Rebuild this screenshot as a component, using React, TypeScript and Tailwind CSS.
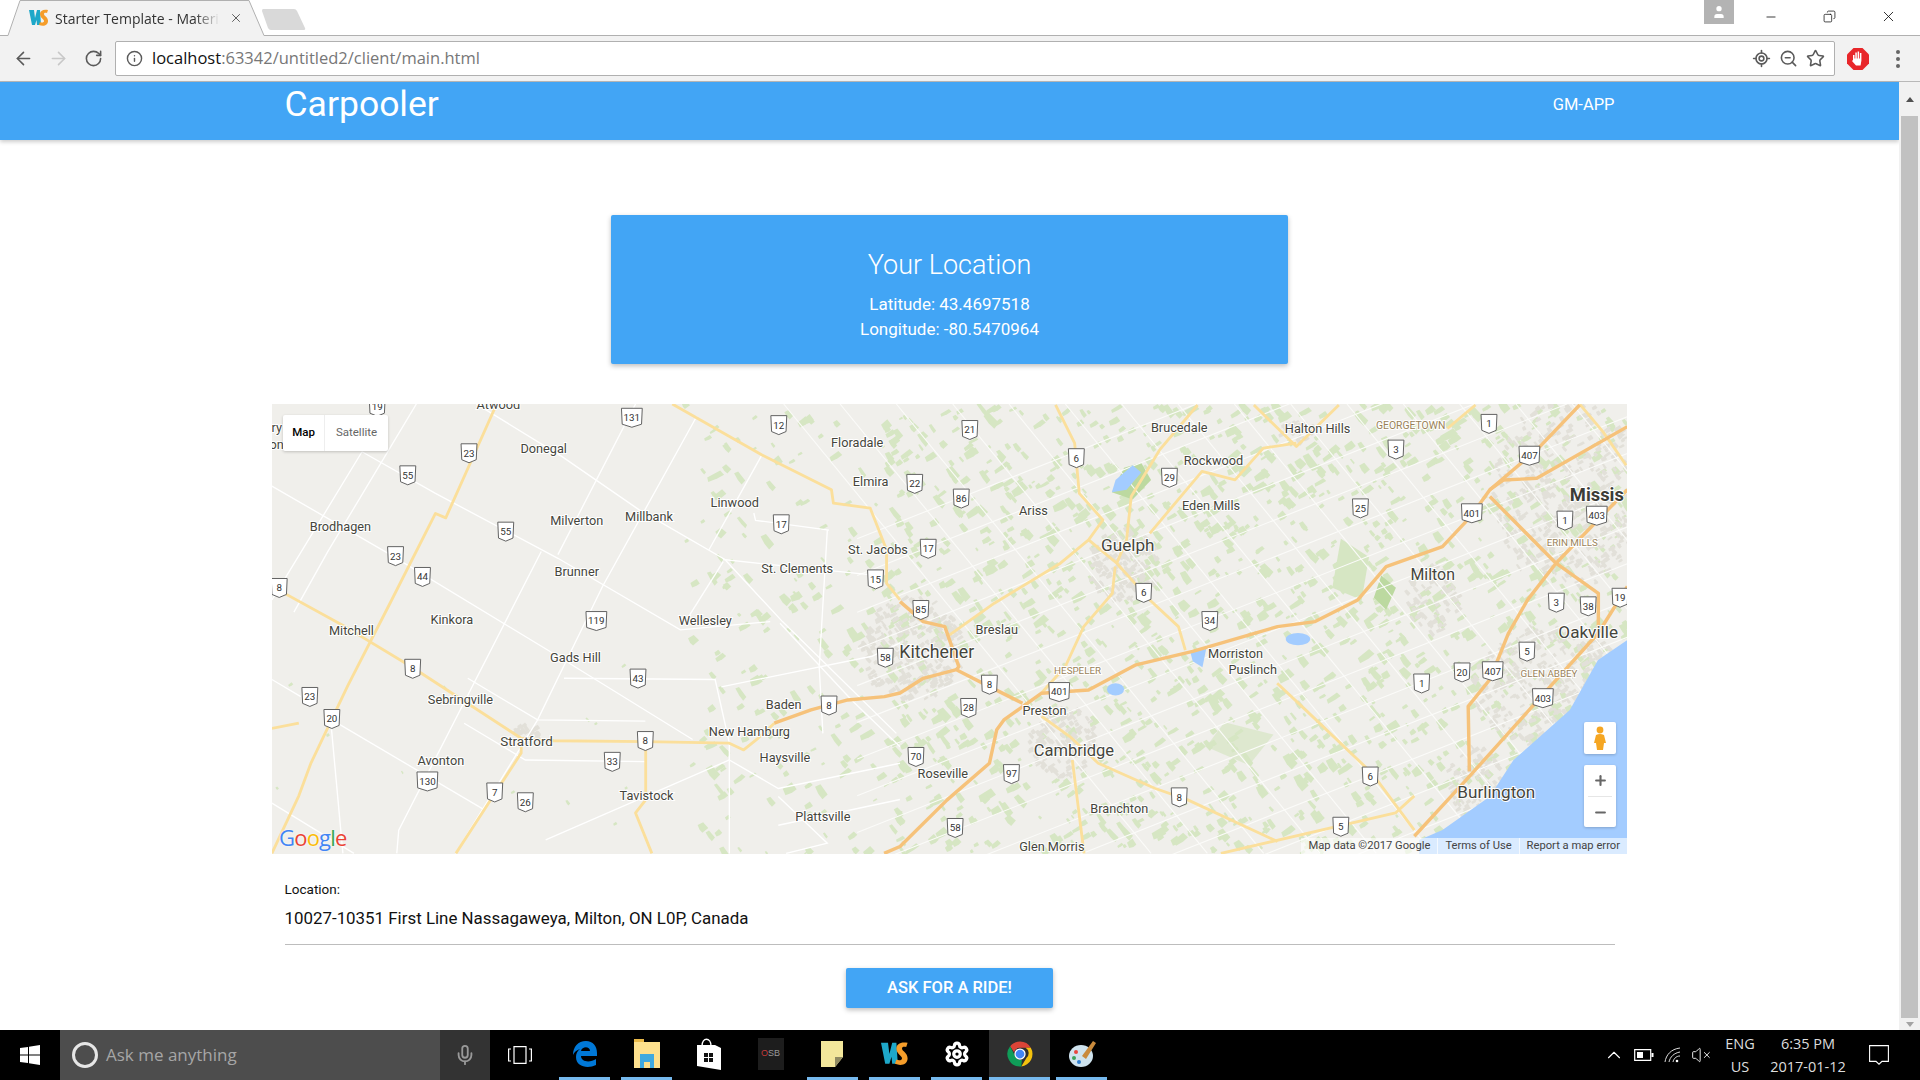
// ** Icon Imports
import {
  ArrowLeft, ArrowRight, RotateCw, Info, LocateFixed, ZoomOut, Star, Minus, Plus, X, Copy,
  User, Mic, ChevronUp, VolumeX, Settings,
} from "lucide-react"

type Pt = [number, number]

// all map data below is in the 1568 wide coordinates of the screenshot, the viewBox takes care of the scale
const yellowRoads: Pt[][] = [
  [[405.6, 330], [364, 423], [355.6, 419.4], [319, 491.7], [284, 560], [254, 623], [244, 650], [222, 697]],
  [[222, 479], [282, 512], [335.6, 544.4], [425.6, 603]],
  [[425.6, 603], [452.3, 605], [527.3, 605.7], [595.6, 607], [607.3, 612.5], [619, 603], [632.3, 590.7]],
  [[425.6, 603], [425.6, 615], [372.3, 697]],
  [[527.3, 605.7], [527.3, 653.3], [519, 664], [532.3, 697]],
  [[222, 595], [244, 590.7]],
  [[549, 330], [622.3, 371.6], [679, 400], [680.6, 411], [710.6, 415], [724, 449], [724, 476.4], [735, 490]],
  [[862, 330.8], [877.6, 362], [881.4, 403], [900.7, 424.7], [889, 441], [866, 460], [812, 492.7], [773.5, 520]],
  [[889, 441], [912, 460], [939, 490], [962.4, 511.8], [968, 531]],
  [[978, 330.8], [947, 367.5], [923.8, 405.6], [920, 441], [912, 460]],
  [[910.7, 462.8], [908.4, 484.6], [885, 511.8], [870, 544.4], [850.6, 566]],
  [[1058.7, 362], [1031.7, 366], [1008.6, 392], [981.6, 385], [939, 435.6]],
  [[1024, 330.8], [1058.7, 364.8], [1093.4, 330.8]],
  [[1043, 558], [1066.4, 580], [1120.4, 631.5], [1155, 678]],
  [[850.6, 585], [873.7, 601.6], [896.9, 623.4], [943, 643.8], [970, 653.3], [1043.3, 687.3]],
  [[875.7, 620.7], [885.3, 697]],
  [[997, 697], [1139.6, 664], [1155, 650]],
  [[1182, 350], [1205, 330.8]],
  [[1290, 330], [1309, 352.6], [1328, 380]],
]

const orangeRoads: Pt[][] = [
  [[632.3, 590.7], [662.3, 579.8], [692.3, 571.7], [722.3, 569], [735, 566], [754, 554], [781, 547], [808, 560.8], [835, 574.4]],
  [[781, 547], [783, 544.5], [771.6, 511.8], [754, 507.7], [735, 491.4]],
  [[722, 697], [735, 691.4], [773.5, 653.3], [808, 623.4], [814, 596], [819.8, 588], [850.6, 566.2], [889, 563.5], [927.7, 543], [974, 532], [1043.3, 511.8], [1074, 507.7], [1108.8, 490], [1132, 462.8], [1178, 446.5], [1201, 422], [1216.7, 400], [1228, 392], [1255, 390.7], [1329, 348.5]],
  [[1216.7, 405.6], [1270.7, 460], [1305.3, 484.6], [1305.3, 517]],
  [[1270.7, 460], [1247.5, 490], [1232, 517], [1216.7, 555], [1199, 577], [1200, 630]],
  [[1155, 683], [1197.4, 637], [1251.4, 577], [1305.3, 517], [1329, 479]],
  [[1290, 330.8], [1255, 367.5], [1216.7, 400]],
  [[1329, 400], [1270.7, 460]],
]

const whiteRoads: Pt[][] = [
  [[222, 397], [317, 452], [455.6, 536], [565.6, 604]],
  [[295.6, 369], [355.6, 403], [455.6, 456], [555.6, 514.5], [629, 507.7]],
  [[389, 330], [459, 373], [522, 416.5], [592, 457], [639, 507.7], [732, 599]],
  [[222, 555], [245.6, 569]],
  [[271, 588], [395.6, 661.5]],
  [[379, 590.7], [429, 620.7], [527, 622]],
  [[382, 554], [439, 588], [527, 589]],
  [[460.6, 554], [584, 555], [595.6, 607], [595.6, 697]],
  [[595.6, 620.7], [445.6, 686]],
  [[519, 330], [455.6, 453]],
  [[569, 340], [492, 479], [439, 588], [372, 697]],
  [[442, 450.5], [325.6, 678], [324, 697]],
  [[295.6, 369], [232, 473.7], [222, 490]],
  [[222, 656], [289, 697]],
  [[589, 561], [712, 536], [735, 525]],
  [[637, 509], [695.6, 572], [735, 610]],
  [[675.6, 433], [669, 545], [672, 599]],
  [[615.6, 419], [617, 425], [677, 433]],
  [[590.6, 457], [632, 461.4], [712, 469.6]],
  [[622, 372], [579, 449]],
  [[590.6, 458.7], [559, 509]],
  [[635.6, 650.6], [675.6, 688.7], [642, 697]],
  [[735, 653], [635.6, 674]],
  [[735, 623.4], [635.6, 644], [595.6, 620.7]],
  [[340, 330], [268, 450], [240, 500]],
  [[270, 588], [280, 697]],
]

const labels: [string, number, number, number?, string?][] = [
  ["Atwood", 407, 330], ["Donegal", 444, 366], ["Floradale", 700, 361], ["Brucedale", 963, 349],
  ["Halton Hills", 1076, 350], ["GEORGETOWN", 1152, 347, 8.5, "#9a8259"], ["Rockwood", 991, 376],
  ["Linwood", 600, 410], ["Elmira", 711, 393], ["Ariss", 844, 417], ["Eden Mills", 989, 413],
  ["Milverton", 471, 425], ["Millbank", 530, 422], ["Brodhagen", 278, 430], ["St. Jacobs", 717, 449],
  ["Guelph", 921, 445, 14], ["St. Clements", 651, 464], ["Brunner", 471, 467], ["Milton", 1170, 469, 13],
  ["Kinkora", 369, 506], ["Wellesley", 576, 507], ["Mitchell", 287, 515], ["Breslau", 814, 514],
  ["Oakville", 1297, 516, 14], ["Kitchener", 765, 532, 14.5], ["Morriston", 1009, 534], ["Gads Hill", 470, 537],
  ["Puslinch", 1023, 547], ["HESPELER", 880, 548, 8, "#9a8259"], ["GLEN ABBEY", 1265, 550, 8, "#9a8259"],
  ["ERIN MILLS", 1284, 443, 8, "#9a8259"], ["Sebringville", 376, 571], ["Baden", 640, 575], ["Preston", 853, 580],
  ["New Hamburg", 612, 597], ["Stratford", 430, 605, 11], ["Cambridge", 877, 613, 13.5], ["Haysville", 641, 619],
  ["Avonton", 360, 621], ["Roseville", 770, 632], ["Burlington", 1222, 647, 14], ["Tavistock", 528, 650],
  ["Branchton", 914, 660], ["Plattsville", 672, 667], ["Glen Morris", 859, 691], ["ry", 226, 349], ["on", 226, 363],
]

const shields: [string, number, number][] = [
  ["19", 308, 332], ["131", 516, 341], ["12", 636, 347], ["21", 792, 351], ["1", 1216, 346], ["23", 383, 370],
  ["55", 333, 388], ["22", 747, 395], ["86", 785, 407], ["6", 879, 374], ["29", 955, 390], ["3", 1140, 367],
  ["407", 1249, 372], ["55", 413, 434], ["17", 638, 428], ["17", 758, 448], ["25", 1111, 415], ["401", 1202, 419],
  ["1", 1278, 425], ["403", 1304, 421], ["23", 323, 454], ["44", 345, 471], ["15", 715, 473], ["85", 752, 498],
  ["6", 934, 484], ["3", 1271, 492], ["38", 1297, 495], ["19", 1323, 488], ["8", 228, 480], ["119", 487, 507],
  ["34", 988, 507], ["5", 1247, 532], ["58", 723, 537], ["8", 337, 546], ["43", 521, 554], ["8", 808, 559],
  ["401", 865, 565], ["20", 1194, 549], ["407", 1219, 548], ["1", 1161, 558], ["403", 1260, 570], ["23", 253, 569],
  ["20", 271, 587], ["8", 677, 576], ["28", 791, 578], ["8", 527, 605], ["33", 500, 622], ["70", 748, 618],
  ["97", 826, 632], ["6", 1119, 634], ["130", 349, 638], ["7", 404, 647], ["26", 429, 655], ["8", 963, 651],
  ["5", 1095, 675], ["58", 780, 676],
]

// small seeded generator so the scattered fields stay the same on every render
const seeded = (seed: number) => () => {
  seed = (seed * 16807) % 2147483647
  return seed / 2147483647
}

// fields follow the concession grid, so the blocks are turned to one of two angles
const blob = (rnd: () => number, x: number, y: number, size: number) => {
  const a = rnd() < 0.5 ? 0.85 + rnd() * 0.2 : -0.62 + rnd() * 0.2
  const l = size * (0.7 + rnd() * 0.9)
  const w = size * (0.4 + rnd() * 0.5)
  const c = Math.cos(a)
  const s = Math.sin(a)
  return [[l, w * 0.8], [l * 0.1, w], [-l, w * 0.8], [-l * 0.9, -w * 0.7], [l * 0.8, -w]]
    .map(([px, py]) => `${(x + px * c - py * s).toFixed(1)},${(y + px * s + py * c).toFixed(1)}`)
    .join(" ")
}

const makeFields = () => {
  const rnd = seeded(4217)
  const out: string[] = []
  for (let i = 0; i < 2100; i++) {
    const x = 560 + rnd() * 770
    const y = 330 + rnd() * 367
    if (x < 720 && rnd() < 0.6) continue
    out.push(blob(rnd, x, y, 1.6 + rnd() * 3))
  }
  for (let i = 0; i < 12; i++) out.push(blob(rnd, 222 + rnd() * 340, 500 + rnd() * 190, 1.4))
  return out
}

const urbanAreas: [number, number, number, number, number][] = [
  [745, 530, 42, 42, 260], [918, 462, 30, 30, 150], [868, 605, 28, 30, 120], [1280, 405, 60, 78, 380],
  [1265, 560, 62, 50, 300], [1205, 640, 24, 30, 80], [1170, 490, 22, 28, 70], [1060, 352, 14, 10, 24],
  [430, 600, 11, 8, 26],
]

const makeUrban = () => {
  const rnd = seeded(991)
  const out: string[] = []
  urbanAreas.forEach(([cx, cy, rx, ry, n]) => {
    for (let i = 0; i < n; i++) {
      const a = rnd() * 6.28
      const r = Math.sqrt(rnd())
      out.push(blob(rnd, cx + Math.cos(a) * r * rx, cy + Math.sin(a) * r * ry, 2.2))
    }
  })
  return out
}

const makeGrid = () => {
  const lines: Pt[][] = []
  for (let i = 0; i < 19; i++) {
    const x = 640 + i * 46
    lines.push([[x, 330], [x + 300, 697]])
  }
  for (let i = 0; i < 20; i++) {
    const y = 440 + i * 30
    lines.push([[700, y], [1330, y - 250]])
  }
  return lines
}

const fields = makeFields()
const urban = makeUrban()
const grid = makeGrid()

const toPoints = (pts: Pt[]) => pts.map((p) => p.join(",")).join(" ")

const Shield = ({ text, x, y }: { text: string; x: number; y: number }) => {
  const w = text.length === 3 ? 8.5 : 6.5
  return (
    <g transform={`translate(${x} ${y})`}>
      <path
        d={`M${-w} -7.5H${w}L${w - 0.6} 5.5L0 8L${-w + 0.6} 5.5Z`}
        fill="#fff"
        stroke="#5f5f5f"
        strokeWidth="0.8"
        strokeLinejoin="round"
      />
      <text textAnchor="middle" y="3" fontSize="8" fill="#333" fontFamily="Roboto, sans-serif">{text}</text>
    </g>
  )
}

const MapCanvas = () => (
  <svg viewBox="222.1 330 1106.6 367.5" preserveAspectRatio="none" className="block h-full w-full">
    <rect x="222" y="330" width="1108" height="368" fill="#f0efeb" />
    {fields.map((p, i) => <polygon key={i} points={p} fill="#d6e6c3" />)}
    {urban.map((p, i) => <polygon key={i} points={p} fill="#e2e0d9" />)}
    <polygon points="918,382 932,378 940,392 925,408 908,402" fill="#bcd9a0" />
    <polygon points="1128,470 1140,480 1132,498 1122,488" fill="#bcd9a0" />
    <polygon points="1095,440 1118,455 1112,490 1088,480" fill="#d6e6c3" />
    <polygon points="1040,600 1000,590 985,610 1020,625" fill="#d6e6c3" opacity="0.7" />
    {grid.map((l, i) => <polyline key={i} points={toPoints(l)} fill="none" stroke="#fbfbf9" strokeWidth="0.9" />)}
    {whiteRoads.map((l, i) => <polyline key={i} points={toPoints(l)} fill="none" stroke="#fff" strokeWidth="1.1" />)}
    <polygon
      points="1329,522.7 1305,539 1282,580 1236,620.7 1216.7,650.6 1178,677.8 1159,686 1159,698 1329,698"
      fill="#a3ccff"
    />
    <polygon points="911,392 925,380 932,386 920,400 908,402" fill="#a3ccff" />
    <ellipse cx="1060" cy="522" rx="10" ry="5" fill="#a3ccff" />
    <ellipse cx="911" cy="563" rx="7" ry="5" fill="#a3ccff" />
    <polygon points="972,532 985,530 982,545 974,540" fill="#a3ccff" />
    {yellowRoads.map((l, i) => (
      <polyline key={i} points={toPoints(l)} fill="none" stroke="#fbdf9b" strokeWidth="2.3" strokeLinejoin="round" />
    ))}
    {orangeRoads.map((l, i) => (
      <polyline key={i} points={toPoints(l)} fill="none" stroke="#f6c27a" strokeWidth="2.8" strokeLinejoin="round" />
    ))}
    {labels.map(([t, x, y, size, color]) => (
      <text
        key={t + x}
        x={x}
        y={y + (size ?? 10.4) * 0.36}
        textAnchor="middle"
        fontSize={size ?? 10.4}
        fill={color ?? "#45453c"}
        stroke="#ffffff"
        strokeWidth="1.6"
        paintOrder="stroke"
        fontFamily="Roboto, sans-serif"
      >
        {t}
      </text>
    ))}
    <text
      x="1282"
      y="409"
      fontSize="15"
      fontWeight="700"
      fill="#3c3c36"
      stroke="#fff"
      strokeWidth="1.6"
      paintOrder="stroke"
      fontFamily="Roboto, sans-serif"
    >
      Missis
    </text>
    {shields.map(([t, x, y], i) => <Shield key={i} text={t} x={x} y={y} />)}
  </svg>
)

const WsIcon = ({ size = 20 }: { size?: number }) => (
  <svg width={size} height={size} viewBox="0 0 20 20">
    <path d="M0 2h5l1 8 2-8h3l1 15H8l-.5-5L6 17H3z" fill="#1ea8c9" />
    <path d="M11 6c0-3 3-5 8-4l-1 3c-2-.5-3 0-3 1 0 2 4 3 4 7 0 4-4 6-9 4l1-3c2 1 4 .5 4-1 0-2-4-3-4-7z" fill="#f59d2a" />
  </svg>
)

const ChromeIcon = () => (
  <svg width="30" height="30" viewBox="0 0 48 48">
    <path d="M24 4a20 20 0 0 1 17.3 10H24a10 10 0 0 0-9.5 7L8.2 11.6A20 20 0 0 1 24 4z" fill="#db4437" />
    <path d="M41.3 14A20 20 0 0 1 26 43.9L34.5 30a10 10 0 0 0-1.5-16z" fill="#f4c20d" />
    <path d="M8.2 11.6L16 27a10 10 0 0 0 11 6.5L26 43.9A20 20 0 0 1 8.2 11.6z" fill="#0f9d58" />
    <circle cx="24" cy="24" r="8" fill="#4285f4" stroke="#fff" strokeWidth="2" />
  </svg>
)

const EdgeIcon = () => (
  <svg width="26" height="28" viewBox="0 0 26 28">
    <path
      d="M1 15C1 7 6 1 14 1c7 0 11 5 11 12v3H9c0 6 9 7 15 3v6c-8 4-20 2-20-8 0-3 1-6 4-8-3 1-6 3-7 6zM9 11h9c0-5-8-5-9 0z"
      fill="#0078d7"
    />
  </svg>
)

const ExplorerIcon = () => (
  <svg width="28" height="30" viewBox="0 0 28 30">
    <path d="M1 0h10v3h16v26H1z" fill="#fde08d" />
    <path d="M1 0h10v3H1z" fill="#e9b949" />
    <path d="M7 15h14v14H7z" fill="#3fa9e0" />
    <path d="M11 23h6v6h-6z" fill="#fde08d" />
  </svg>
)

const StoreIcon = () => (
  <svg width="26" height="32" viewBox="0 0 26 32">
    <path d="M6 8c0-9 9-9 9 0" fill="none" stroke="#fff" strokeWidth="1.4" />
    <path d="M1 7h18l6 3v22L1 28z" fill="#fff" />
    <path d="M8 15h4v4H8zM13 15h4v4h-4zM8 20h4v4H8zM13 20h4v4h-4z" fill="#111" />
  </svg>
)

const StickyIcon = () => (
  <svg width="24" height="26" viewBox="0 0 24 26">
    <path d="M0 0h22v16l-8 10H0z" fill="#f3e79b" />
    <path d="M22 16l-8 10V16z" fill="#8f8a62" />
  </svg>
)

const PaintIcon = () => (
  <svg width="30" height="30" viewBox="0 0 30 30">
    <ellipse cx="14" cy="17" rx="12" ry="11" fill="#cfe3ee" />
    <circle cx="9" cy="13" r="2" fill="#e8473f" />
    <circle cx="7" cy="19" r="2" fill="#3da35a" />
    <circle cx="12" cy="23" r="2" fill="#2f7fd0" />
    <path d="M15 17L26 2l3 2-10 16z" fill="#c98a3c" />
  </svg>
)

const Tab = () => (
  <div className="relative flex h-[36px] w-[266px] items-center pl-[29px] pr-[23px]">
    <svg className="absolute inset-0" width="266" height="36" viewBox="0 0 266 36">
      <path d="M0 35.5H8L20 .5H249L264 35.5H266V36H0Z" fill="#f2f2f2" />
      <path d="M0 35.5H8L20 .5H249L264 35.5H266" fill="none" stroke="#b0b0b0" />
    </svg>
    <span className="relative mr-[6px] flex w-[20px] shrink-0"><WsIcon /></span>
    <span className="relative w-[165px] overflow-hidden whitespace-nowrap font-['Open_Sans',sans-serif] text-[14px] text-[#333] [mask-image:linear-gradient(to_right,#000_85%,transparent)]">
      Starter Template - Material Design
    </span>
    <X className="relative ml-auto text-[#555]" size={14} strokeWidth={1.6} />
  </div>
)

const TabStrip = () => (
  <div className="relative flex h-[36px] items-start bg-white">
    <div className="absolute inset-x-0 bottom-0 h-px bg-[#b0b0b0]" />
    <div className="relative flex">
      <Tab />
      <svg className="-ml-[4px] mt-[9px]" width="44" height="22" viewBox="0 0 44 22">
        <path d="M1 0H32Q34 0 35 2L43 19Q44 21 41 21H9Q7 21 6 19L0 2Q0 0 1 0Z" fill="#d9d9d9" />
      </svg>
    </div>
    <div className="ml-auto mr-[2px] flex items-start">
      <div className="flex h-[24px] w-[30px] items-center justify-center bg-[#b3b3b3]">
        <User size={16} className="text-white" fill="#fff" strokeWidth={0} />
      </div>
      <div className="ml-[7px] flex h-[33px] w-[59px] items-center justify-center">
        <Minus size={14} className="text-[#111]" strokeWidth={1.4} />
      </div>
      <div className="flex h-[33px] w-[59px] items-center justify-center">
        <Copy size={13} className="-scale-x-100 text-[#111]" strokeWidth={1.4} />
      </div>
      <div className="flex h-[33px] w-[59px] items-center justify-center">
        <X size={17} className="text-[#111]" strokeWidth={1.2} />
      </div>
    </div>
  </div>
)

const Toolbar = () => (
  <div className="flex h-[46px] items-center border-b border-[#b8b8b8] bg-[#f2f2f2]">
    <div className="flex w-[115px] items-center pl-[13px]">
      <ArrowLeft size={21} className="text-[#5a5a5a]" strokeWidth={1.8} />
      <ArrowRight size={21} className="ml-[14px] text-[#c8c8c8]" strokeWidth={1.8} />
      <RotateCw size={19} className="ml-[15px] text-[#5a5a5a]" strokeWidth={2} />
    </div>
    <div className="flex h-[35px] w-[1720px] items-center rounded-[2px] border border-[#b0b0b0] bg-white pl-[10px] pr-[9px]">
      <Info size={17} className="text-[#5a5a5a]" strokeWidth={2} />
      <span className="ml-[9px] font-['Open_Sans',sans-serif] text-[16.5px] text-[#111]">
        localhost<span className="text-[#777]">:63342/untitled2/client/main.html</span>
      </span>
      <div className="ml-auto flex items-center gap-[8px]">
        <LocateFixed size={19} className="text-[#5a5a5a]" strokeWidth={2} />
        <ZoomOut size={19} className="text-[#5a5a5a]" strokeWidth={2} />
        <Star size={19} className="text-[#5a5a5a]" strokeWidth={2} />
      </div>
    </div>
    <svg className="ml-[12px]" width="22" height="22" viewBox="0 0 22 22">
      <path d="M6.500 0h9L22 6.500v9L15.500 22h-9L0 15.500v-9z" fill="#e8262a" />
      <path d="M6 12V7h1.500v3.500h.8V4.500h1.500v6h.8V3.500h1.500v7h.8V5h1.500v7.500l-.8 5H9l-4-4.500 1-1z" fill="#fff" />
    </svg>
    <div className="ml-[27px] flex flex-col gap-[3px]">
      <span className="h-[4px] w-[4px] rounded-full bg-[#666]" />
      <span className="h-[4px] w-[4px] rounded-full bg-[#666]" />
      <span className="h-[4px] w-[4px] rounded-full bg-[#666]" />
    </div>
  </div>
)

const MapControls = () => (
  <>
    <div className="absolute left-[11px] top-[11px] flex h-[36px] w-[105px] items-center rounded-[2px] bg-white font-['Roboto',sans-serif] text-[11.5px] shadow-[0_1px_3px_rgba(0,0,0,0.2)]">
      <span className="flex h-full w-[42px] items-center justify-center border-r border-[#eee] font-medium text-black">Map</span>
      <span className="flex h-full flex-1 items-center justify-center text-[#666]">Satellite</span>
    </div>
    <span className="absolute bottom-[2px] left-[7px] font-['Open_Sans',sans-serif] text-[22px] font-medium leading-[30px] tracking-[-0.8px] [text-shadow:0_0_2px_#fff]">
      <span className="text-[#4285f4]">G</span>
      <span className="text-[#ea4335]">o</span>
      <span className="text-[#fbbc05]">o</span>
      <span className="text-[#4285f4]">g</span>
      <span className="text-[#34a853]">l</span>
      <span className="text-[#ea4335]">e</span>
    </span>
    <div className="absolute right-[11px] top-[318px] flex h-[32px] w-[32px] items-center justify-center rounded-[2px] bg-white shadow-[0_1px_3px_rgba(0,0,0,0.2)]">
      <svg width="12" height="24" viewBox="0 0 12 24">
        <circle cx="6" cy="4" r="3.4" fill="#f5a623" />
        <path d="M2 9q4-2 8 0l2 8h-2l-1 7H3l-1-7H0z" fill="#f5a623" />
      </svg>
    </div>
    <div className="absolute right-[11px] top-[361px] flex h-[62px] w-[32px] flex-col items-center rounded-[2px] bg-white shadow-[0_1px_3px_rgba(0,0,0,0.2)]">
      <span className="flex h-[31px] items-center"><Plus size={15} className="text-[#666]" strokeWidth={3.4} /></span>
      <span className="h-px w-[24px] bg-[#e6e6e6]" />
      <span className="flex h-[30px] items-center"><Minus size={15} className="text-[#666]" strokeWidth={3.4} /></span>
    </div>
    <div className="absolute bottom-0 right-0 flex h-[16px] items-center gap-[7px] bg-white/60 pl-[8px] pr-[7px] font-['Roboto',sans-serif] text-[11.2px] text-[#444]">
      <span>Map data ©2017 Google</span>
      <span className="h-full w-px bg-white/70" />
      <span>Terms of Use</span>
      <span className="h-full w-px bg-white/70" />
      <span>Report a map error</span>
    </div>
  </>
)

const Page = () => (
  <main className="flex min-w-0 flex-1 flex-col items-center font-['Roboto',sans-serif]">
    <nav className="flex h-[58px] w-full shrink-0 justify-center bg-[#42a5f5] shadow-[0_2px_4px_rgba(0,0,0,0.2)]">
      <div className="flex w-[1330px] items-start justify-between text-white">
        <span className="mt-[-2px] text-[35.5px] leading-[48px]">Carpooler</span>
        <span className="mt-[12px] text-[16.5px] leading-[22px]">GM-APP</span>
      </div>
    </nav>

    <section className="mt-[75px] flex h-[149px] w-[677px] shrink-0 flex-col items-center rounded-[2px] bg-[#42a5f5] pt-[31px] text-white shadow-[0_2px_5px_rgba(0,0,0,0.26)]">
      <h1 className="text-[27px] font-light leading-[38px]">Your Location</h1>
      <p className="mt-[8px] text-[17px] leading-[25px]">Latitude: 43.4697518</p>
      <p className="text-[17px] leading-[25px]">Longitude: -80.5470964</p>
    </section>

    <div className="relative mt-[40px] h-[450px] w-[1355px] shrink-0 overflow-hidden">
      <MapCanvas />
      <MapControls />
    </div>

    <div className="mt-[25px] w-[1330px] shrink-0 border-b border-[#bdbdbd] pb-[14px] text-[#111]">
      <p className="text-[13.5px] leading-[20px]">Location:</p>
      <p className="mt-[7px] text-[16.9px] leading-[24px]">10027-10351 First Line Nassagaweya, Milton, ON L0P, Canada</p>
    </div>

    <button className="mt-[23px] flex h-[40px] w-[207px] shrink-0 items-center justify-center rounded-[2px] bg-[#42a5f5] text-[16.5px] font-medium text-white shadow-[0_2px_5px_rgba(0,0,0,0.26)]">
      ASK FOR A RIDE!
    </button>
  </main>
)

const Scrollbar = () => (
  <aside className="flex w-[21px] shrink-0 flex-col items-center bg-[#f1f1f1]">
    <div className="flex h-[34px] w-full items-center justify-center pt-[1px]">
      <span className="h-0 w-0 border-x-[4px] border-b-[5px] border-x-transparent border-b-[#505050]" />
    </div>
    <div className="h-[902px] w-[17px] bg-[#c1c1c1]" />
    <div className="flex flex-1 items-center justify-center">
      <span className="h-0 w-0 border-x-[4px] border-t-[5px] border-x-transparent border-t-[#a3a3a3]" />
    </div>
  </aside>
)

const taskIcons = [
  { key: "edge", node: <EdgeIcon />, w: "ml-[9px]", on: true },
  { key: "explorer", node: <ExplorerIcon />, w: "ml-[11px]", on: true },
  { key: "store", node: <StoreIcon />, w: "ml-[11px]", on: false },
  { key: "osb", node: <span className="flex h-[32px] w-[26px] items-center justify-center bg-[#1d1d1d] font-['Liberation_Sans',sans-serif] text-[9px] text-[#c23a3a]">O<span className="text-[#999]">SB</span></span>, w: "ml-[11px]", on: false },
  { key: "sticky", node: <StickyIcon />, w: "ml-[11px]", on: true },
  { key: "ws", node: <WsIcon size={28} />, w: "ml-[11px]", on: true },
  { key: "gear", node: <Settings size={26} className="text-white" fill="none" stroke="#fff" strokeWidth={3} />, w: "ml-[11px]", on: true },
]

const Taskbar = () => (
  <footer className="flex h-[50px] shrink-0 items-stretch bg-black font-['Open_Sans',sans-serif] text-[#ddd]">
    <div className="flex w-[60px] items-center justify-center">
      <svg width="20" height="20" viewBox="0 0 20 20" fill="#fff">
        <path d="M0 3l8-1v7.500H0zM9 1.800L20 0v9.500H9zM0 10.500h8V18l-8-1zM9 10.500h11V20L9 18.200z" />
      </svg>
    </div>
    <div className="flex w-[380px] items-center bg-[#4d4d4d] pl-[12px]">
      <span className="h-[26px] w-[26px] rounded-full border-[3px] border-[#e6e6e6]" />
      <span className="ml-[8px] text-[17px] text-[#a6a6a6]">Ask me anything</span>
    </div>
    <div className="flex w-[50px] items-center justify-center bg-[#333]">
      <Mic size={22} className="text-[#999]" />
    </div>
    <div className="flex w-[60px] items-center justify-center">
      <svg width="24" height="18" viewBox="0 0 24 18" fill="none" stroke="#fff" strokeWidth="1.2">
        <path d="M6 .6h12v16.800H6zM3 3H.6v12H3M21 3h2.400v12H21" />
      </svg>
    </div>
    {taskIcons.map((item) => (
      <div key={item.key} className={`flex w-[51px] flex-col items-center ${item.w}`}>
        <div className="flex flex-1 items-center justify-center">{item.node}</div>
        <div className={item.on ? "h-[3px] w-full bg-[#76b9ed]" : "h-[3px] w-full"} />
      </div>
    ))}
    <div className="ml-[7px] flex w-[61px] flex-col items-center bg-[#2f2f2f]">
      <div className="flex flex-1 items-center justify-center"><ChromeIcon /></div>
      <div className="h-[3px] w-full bg-[#76b9ed]" />
    </div>
    <div className="ml-[6px] flex w-[51px] flex-col items-center">
      <div className="flex flex-1 items-center justify-center"><PaintIcon /></div>
      <div className="h-[3px] w-full bg-[#76b9ed]" />
    </div>

    <div className="ml-auto flex items-center text-[14.5px]">
      <ChevronUp size={22} strokeWidth={1.2} className="text-white" />
      <svg className="ml-[9px]" width="20" height="12" viewBox="0 0 20 12">
        <path d="M.7.700h16v10.600H.7z" fill="none" stroke="#fff" strokeWidth="1.2" />
        <path d="M3 3h6v6H3z" fill="#fff" />
        <path d="M17.500 4H19.500V8H17.500z" fill="#fff" />
      </svg>
      <svg className="ml-[10px]" width="17" height="16" viewBox="0 0 17 16" fill="none" stroke="#ddd" strokeWidth="1">
        <path d="M1 15C2 8 7 2 16 1M5 15C6 10 10 6 16 5M9 15c.5-3 3-6 7-6" />
        <circle cx="13" cy="14" r="1.300" fill="#fff" stroke="none" />
      </svg>
      <VolumeX size={20} strokeWidth={1.1} className="ml-[10px] text-white" />
      <div className="ml-[9px] flex w-[40px] flex-col items-center leading-[23px]">
        <span>ENG</span>
        <span>US</span>
      </div>
      <div className="ml-[5px] flex w-[86px] flex-col items-center leading-[23px]">
        <span>6:35 PM</span>
        <span>2017-01-12</span>
      </div>
      <div className="ml-[18px] mr-[31px]">
        <svg width="20" height="20" viewBox="0 0 20 20" fill="none" stroke="#fff" strokeWidth="1.1">
          <path d="M.6.600h18.800V16.400H13L10 19.200 7 16.400H.6z" />
        </svg>
      </div>
    </div>
  </footer>
)

const App = () => (
  <div className="flex h-[1080px] w-[1920px] flex-col overflow-hidden bg-white">
    <TabStrip />
    <Toolbar />
    <div className="flex min-h-0 flex-1">
      <Page />
      <Scrollbar />
    </div>
    <Taskbar />
  </div>
)

export default App
